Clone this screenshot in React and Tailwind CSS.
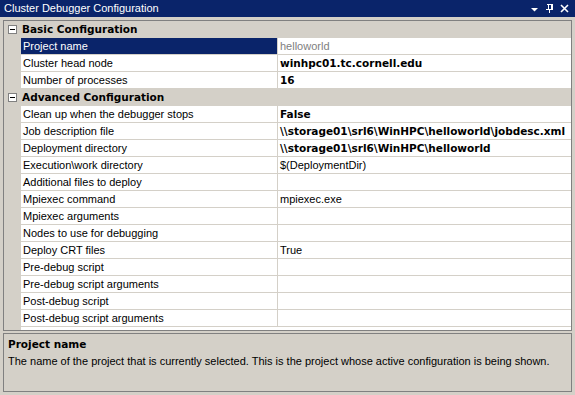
import React from "react";

const font = { fontFamily: '"Liberation Sans", Arial, sans-serif' };
const boldCls = "font-bold text-[10.5px] [font-family:'DejaVu_Sans',sans-serif]";

const Minus = () => (
  <div className="w-[9px] h-[9px] border border-[#808080] bg-white flex items-center justify-center">
    <div className="w-[5px] h-[1px] bg-black" />
  </div>
);

function Category({ title }) {
  return (
    <div className="flex h-[17px] bg-[#d4d0c8] items-center">
      <div className="w-[17px] flex justify-center shrink-0">
        <Minus />
      </div>
      <div className={"pl-[1px] text-black leading-none " + boldCls}>{title}</div>
    </div>
  );
}

function Row({ label, value, bold, selected, gray }) {
  return (
    <div className="flex h-[17px]">
      <div className="w-[17px] shrink-0 bg-[#d4d0c8]" />
      <div
        className={
          "w-[256px] shrink-0 flex items-center pl-[2px] text-[11px] leading-none border-b border-[#d4d0c8] " +
          (selected ? "bg-[#0a246a] text-white" : "bg-white text-black")
        }
      >
        <span className="whitespace-nowrap">{label}</span>
      </div>
      <div className="w-[1px] shrink-0 bg-[#d4d0c8]" />
      <div
        className={
          "flex-1 flex items-center pl-[2px] leading-none bg-white border-b border-[#d4d0c8] whitespace-nowrap overflow-hidden " +
          (bold ? boldCls + " text-black" : "text-[11px] ") +
          (gray ? " text-[#808080]" : " text-black")
        }
      >
        {value}
      </div>
    </div>
  );
}

export default function App() {
  return (
    <div className="w-[575px] h-[395px] bg-[#d4d0c8] flex flex-col overflow-hidden" style={font}>
      <div className="h-[17px] bg-[#0a246a] flex items-center justify-between pl-[4px] pr-[6px] shrink-0">
        <span className="text-white text-[11px] leading-none">Cluster Debugger Configuration</span>
        <div className="flex items-center gap-[6px]">
          <svg width="9" height="9" viewBox="0 0 9 9">
            <path d="M1 4h7L4.5 7.5z" fill="white" />
          </svg>
          <svg width="9" height="11" viewBox="0 0 9 11">
            <path d="M2 1h5M3 1v5M6 1v5M7 1v5M1 6h7M4.5 6v4" stroke="white" strokeWidth="1" fill="none" shapeRendering="crispEdges" />
          </svg>
          <svg width="9" height="9" viewBox="0 0 9 9">
            <path d="M1 1l7 7M8 1l-7 7" stroke="white" strokeWidth="1.6" />
          </svg>
        </div>
      </div>

      <div className="mt-[3px] ml-[3px] w-[569px] h-[311px] border border-[#808080] bg-white flex flex-col shrink-0 overflow-hidden">
        <Category title="Basic Configuration" />
        <Row label="Project name" value="helloworld" selected gray />
        <Row label="Cluster head node" value="winhpc01.tc.cornell.edu" bold />
        <Row label="Number of processes" value="16" bold />
        <Category title="Advanced Configuration" />
        <Row label="Clean up when the debugger stops" value="False" bold />
        <Row label="Job description file" value="\\storage01\srl6\WinHPC\helloworld\jobdesc.xml" bold />
        <Row label="Deployment directory" value="\\storage01\srl6\WinHPC\helloworld" bold />
        <Row label="Execution\work directory" value="$(DeploymentDir)" />
        <Row label="Additional files to deploy" value="" />
        <Row label="Mpiexec command" value="mpiexec.exe" />
        <Row label="Mpiexec arguments" value="" />
        <Row label="Nodes to use for debugging" value="" />
        <Row label="Deploy CRT files" value="True" />
        <Row label="Pre-debug script" value="" />
        <Row label="Pre-debug script arguments" value="" />
        <Row label="Post-debug script" value="" />
        <Row label="Post-debug script arguments" value="" />
        <div className="flex flex-1">
          <div className="w-[17px] shrink-0 bg-[#d4d0c8]" />
          <div className="flex-1 bg-white" />
        </div>
      </div>

      <div className="mt-[2px] ml-[3px] w-[569px] h-[59px] border border-[#808080] bg-[#d4d0c8] pl-[4px] pt-[4px] shrink-0">
        <div className={"text-black leading-[13px] " + boldCls}>Project name</div>
        <div className="text-[11px] text-black leading-[13px] mt-[4px] whitespace-nowrap">
          The name of the project that is currently selected. This is the project whose active configuration is being shown.
        </div>
      </div>
    </div>
  );
}
